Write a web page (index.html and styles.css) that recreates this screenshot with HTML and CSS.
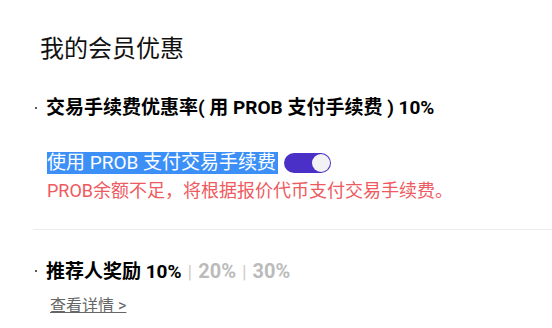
FILE: index.html
```html
<!DOCTYPE html>
<html lang="zh-CN">
<head>
<meta charset="utf-8">
<title>我的会员优惠</title>
<link rel="stylesheet" href="styles.css">
</head>
<body>
<div class="page">
  <h1 class="title">我的会员优惠</h1>

  <div class="item">
    <span class="dot"></span>
    <span class="item-text">交易手续费优惠率( 用 PROB 支付手续费 ) 10%</span>
  </div>

  <div class="toggle-row">
    <span class="toggle-label">使用 PROB 支付交易手续费</span>
    <span class="switch"><span class="knob"></span></span>
  </div>
  <div class="warn">PROB余额不足，将根据报价代币支付交易手续费。</div>

  <div class="divider"></div>

  <div class="item item-ref">
    <span class="dot"></span>
    <span class="item-text">推荐人奖励 10%<span class="sep">|</span><span class="muted">20%</span><span class="sep">|</span><span class="muted">30%</span></span>
  </div>

  <a class="link" href="#">查看详情 &gt;</a>
</div>
</body>
</html>
```

FILE: styles.css
```css
html, body {
  margin: 0;
  padding: 0;
  background: #ffffff;
}

body {
  font-family: Roboto, "Noto Sans CJK SC", sans-serif;
  color: #000;
  width: 552px;
  height: 328px;
  overflow: hidden;
}

.page {
  padding-left: 33px;
  padding-top: 33px;
}

.title {
  margin: 0 0 0 7px;
  font-size: 24px;
  line-height: 32px;
  font-weight: 400;
  color: #111;
}

.item {
  display: flex;
  align-items: center;
  margin-top: 30px;
  padding-left: 2px;
  height: 26px;
}

.dot {
  width: 2px;
  height: 2px;
  background: #222;
  border-radius: 50%;
  margin-right: 9px;
}

.item-text {
  font-size: 19px;
  line-height: 26px;
  font-weight: 700;
}

.toggle-row {
  display: flex;
  align-items: center;
  margin: 31px 0 0 14px;
  height: 22px;
}

.toggle-label {
  background: #3b8ff7;
  color: #fff;
  font-size: 19px;
  line-height: 22px;
  padding-right: 2px;
}

.switch {
  position: relative;
  width: 47px;
  height: 20px;
  border-radius: 10px;
  background: #4a30c6;
  margin-left: 6px;
}

.knob {
  position: absolute;
  right: 1px;
  top: 1px;
  width: 18px;
  height: 18px;
  border-radius: 50%;
  background: #f2f2f5;
}

.warn {
  margin: 6px 0 0 14px;
  font-size: 18px;
  line-height: 22px;
  color: #ee5a60;
}

.divider {
  margin-top: 27px;
  border-top: 1px solid #ececec;
}

.item-ref {
  margin-top: 28px;
}

.sep {
  color: #d4cdc6;
  font-weight: 400;
  padding: 0 6px;
}

.muted {
  color: #bbbbbb;
  font-size: 20px;
}

.link {
  display: inline-block;
  margin: 11px 0 0 17px;
  font-size: 16px;
  line-height: 22px;
  color: #666;
  text-decoration: underline;
}
```
